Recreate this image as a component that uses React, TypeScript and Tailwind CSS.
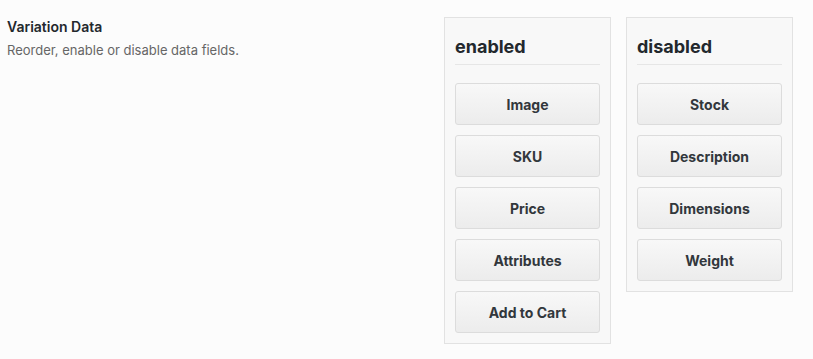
const enabled = ["Image", "SKU", "Price", "Attributes", "Add to Cart"];
const disabled = ["Stock", "Description", "Dimensions", "Weight"];

const FieldList = ({ title, items }: { title: string; items: string[] }) => {
  return (
    <div className="w-[167px] border border-[#e2e2e2] bg-[#f8f8f8] px-[10px] pt-[17px] pb-[10px]">
      <h3 className="text-[18px] font-bold leading-[24px] text-[#23282d] pb-[5px] border-b border-[#e6e6e6] mb-[18px]">
        {title}
      </h3>
      <div className="flex flex-col gap-[10px]">
        {items.map((item) => (
          <div
            key={item}
            className="h-[42px] flex items-center justify-center rounded-[3px] border border-[#dcdcdc] bg-gradient-to-b from-[#f8f8f8] to-[#ececec] text-[14px] font-bold text-[#32373c]"
          >
            {item}
          </div>
        ))}
      </div>
    </div>
  );
};

export default function App() {
  return (
    <div
      className="min-h-[359px] bg-[#fcfcfc] flex items-start"
      style={{ fontFamily: "Inter, 'Liberation Sans', sans-serif" }}
    >
      <div className="w-[444px] pl-[7px] pt-[17px]">
        <h2 className="text-[14px] font-semibold leading-[20px] text-[#23282d]">Variation Data</h2>
        <p className="text-[13px] leading-[20px] mt-[3px] text-[#666]">
          Reorder, enable or disable data fields.
        </p>
      </div>
      <div className="flex items-start gap-[15px] pt-[17px]">
        <FieldList title="enabled" items={enabled} />
        <FieldList title="disabled" items={disabled} />
      </div>
    </div>
  );
}
